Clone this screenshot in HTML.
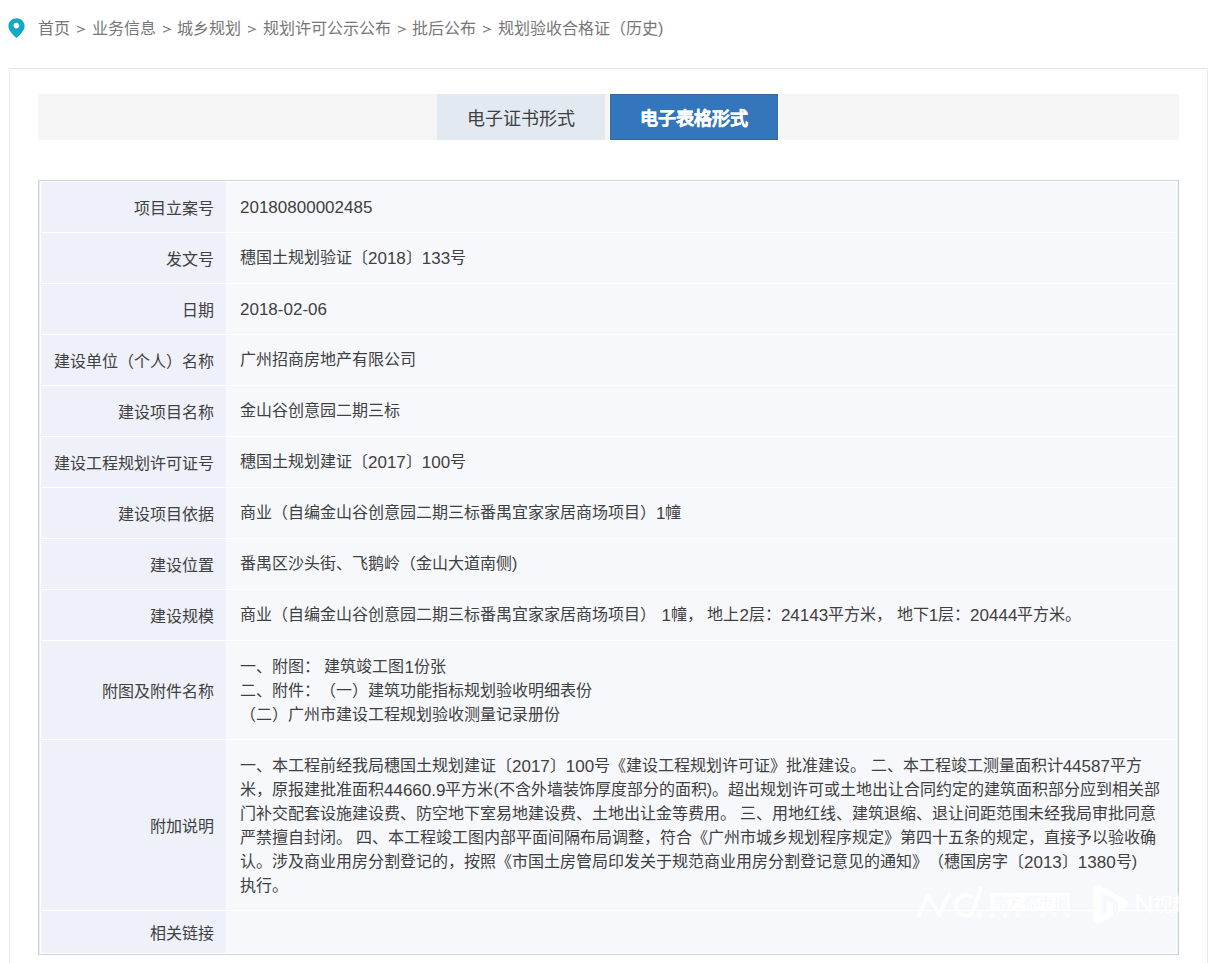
<!DOCTYPE html>
<html lang="zh-CN"><head><meta charset="utf-8">
<style>
*{margin:0;padding:0;box-sizing:border-box}
html,body{width:1218px;height:963px;overflow:hidden;background:#fff}
body{font-family:"Liberation Sans",sans-serif;color:#333;position:relative;text-spacing-trim:space-all}
.crumb{position:absolute;left:38px;top:18px;font-size:16px;line-height:22px;color:#777;white-space:nowrap}
.s{display:inline-block;width:21.6px;height:22px;vertical-align:top}
.pin{position:absolute;left:8px;top:18px}
.panel{position:absolute;left:9px;top:68px;width:1199px;height:920px;border:1px solid #e4e4e4;border-left-color:#ececec;border-right-color:#ececec}
.tabbar{position:absolute;left:38px;top:94px;width:1141px;height:46px;background:#f5f5f5}
.tab{position:absolute;top:94px;height:46px;line-height:46px;padding-top:2px;text-align:center;font-size:18px}
.t1{left:437px;width:168px;background:#e2e9f1;color:#404040}
.t2{left:610px;width:168px;background:#3476bb;border:1px solid #35689f;line-height:44px;color:#fff;font-weight:bold;-webkit-text-stroke:0.35px #fff;box-shadow:-1px 0 0 #fff,1px 0 0 #fff}
.tbl{position:absolute;left:38px;top:180px;width:1141px;height:775px;border:1px solid #c9d6d9;background:#fff}
.dv{position:absolute;left:226px;top:182px;width:1px;height:771px;background:#fafbfd}
.tbl2{position:absolute;left:39px;top:181px;width:1139px;height:773px;border-left:1px solid #e4edef;border-right:1px solid #e4edef}
.lab,.val{position:absolute;display:flex;align-items:center;padding-top:0px;font-size:16px;color:#404040;white-space:nowrap}
.lab{left:41px;width:185px;background:#eef1f9;justify-content:flex-end;padding-right:12px}
.val{left:227px;width:949px;background:#f7f8fc;padding-left:13px;line-height:24px}
.n{font-size:17px;position:relative;top:1px}
.ml{padding-top:2px}
.g{display:inline-block;width:5.5px}
.wm{position:absolute;left:0;top:0}
</style></head><body>
<svg class="pin" width="17" height="21" viewBox="0 0 17 21"><path d="M8.5 0.3C4 0.3 0.4 3.8 0.4 8.2c0 4.4 4.6 8.3 8.1 11.9c3.5-3.6 8.1-7.5 8.1-11.9C16.6 3.8 13 0.3 8.5 0.3z" fill="#12a9c8"/><circle cx="8.4" cy="7.6" r="2.8" fill="#fff"/></svg>
<div class="crumb">首页<svg class="s" viewBox="0 0 21.6 22"><path d="M7 8.3L14.2 11.3L7 14.3" fill="none" stroke="#777" stroke-width="1.15"/></svg>业务信息<svg class="s" viewBox="0 0 21.6 22"><path d="M7 8.3L14.2 11.3L7 14.3" fill="none" stroke="#777" stroke-width="1.15"/></svg>城乡规划<svg class="s" viewBox="0 0 21.6 22"><path d="M7 8.3L14.2 11.3L7 14.3" fill="none" stroke="#777" stroke-width="1.15"/></svg>规划许可公示公布<svg class="s" viewBox="0 0 21.6 22"><path d="M7 8.3L14.2 11.3L7 14.3" fill="none" stroke="#777" stroke-width="1.15"/></svg>批后公布<svg class="s" viewBox="0 0 21.6 22"><path d="M7 8.3L14.2 11.3L7 14.3" fill="none" stroke="#777" stroke-width="1.15"/></svg>规划验收合格证（历史)</div>
<div class="panel"></div>
<div class="tabbar"></div>
<div class="tab t1">电子证书形式</div>
<div class="tab t2">电子表格形式</div>
<div class="tbl"></div><div class="tbl2"></div><div class="dv"></div>
<div class="lab" style="top:182px;height:50px">项目立案号</div><div class="val" style="top:182px;height:50px"><span class="n">20180800002485</span></div>
<div class="lab" style="top:233px;height:50px">发文号</div><div class="val" style="top:233px;height:50px">穗国土规划验证〔<span class="n">2018</span>〕<span class="n">133</span>号</div>
<div class="lab" style="top:284px;height:50px">日期</div><div class="val" style="top:284px;height:50px"><span class="n">2018-02-06</span></div>
<div class="lab" style="top:335px;height:50px">建设单位（个人）名称</div><div class="val" style="top:335px;height:50px">广州招商房地产有限公司</div>
<div class="lab" style="top:386px;height:50px">建设项目名称</div><div class="val" style="top:386px;height:50px">金山谷创意园二期三标</div>
<div class="lab" style="top:437px;height:50px">建设工程规划许可证号</div><div class="val" style="top:437px;height:50px">穗国土规划建证〔<span class="n">2017</span>〕<span class="n">100</span>号</div>
<div class="lab" style="top:488px;height:50px">建设项目依据</div><div class="val" style="top:488px;height:50px">商业（自编金山谷创意园二期三标番禺宜家家居商场项目）<span class="n">1</span>幢</div>
<div class="lab" style="top:539px;height:50px">建设位置</div><div class="val" style="top:539px;height:50px">番禺区沙头街、飞鹅岭（金山大道南侧)</div>
<div class="lab" style="top:590px;height:50px">建设规模</div><div class="val" style="top:590px;height:50px">商业（自编金山谷创意园二期三标番禺宜家家居商场项目）<i class="g"></i><span class="n">1</span>幢， 地上<span class="n">2</span>层：<span class="n">24143</span>平方米， 地下<span class="n">1</span>层：<span class="n">20444</span>平方米。</div>
<div class="lab" style="top:641px;height:98px">附图及附件名称</div><div class="val ml" style="top:641px;height:98px"><div>一、附图： 建筑竣工图<span class="n">1</span>份张<br>二、附件：（一）建筑功能指标规划验收明细表份<br>（二）广州市建设工程规划验收测量记录册份</div></div>
<div class="lab" style="top:740px;height:170px">附加说明</div><div class="val ml" style="top:740px;height:170px"><div>一、本工程前经我局穗国土规划建证〔<span class="n">2017</span>〕<span class="n">100</span>号《建设工程规划许可证》批准建设。 二、本工程竣工测量面积计<span class="n">44587</span>平方<br>米，原报建批准面积<span class="n">44660.9</span>平方米(不含外墙装饰厚度部分的面积)。超出规划许可或土地出让合同约定的建筑面积部分应到相关部<br>门补交配套设施建设费、防空地下室易地建设费、土地出让金等费用。 三、用地红线、建筑退缩、退让间距范围未经我局审批同意<br>严禁擅自封闭。 四、本工程竣工图内部平面间隔布局调整，符合《广州市城乡规划程序规定》第四十五条的规定，直接予以验收确<br>认。涉及商业用房分割登记的，按照《市国土房管局印发关于规范商业用房分割登记意见的通知》（穗国房字〔<span class="n">2013</span>〕<span class="n">1380</span>号)<br>执行。</div></div>
<div class="lab" style="top:911px;height:42px">相关链接</div><div class="val" style="top:911px;height:42px"></div>
<svg class="wm" width="1218" height="963" viewBox="0 0 1218 963" style="pointer-events:none">
<g fill="none" stroke="#fff" stroke-width="4.2" stroke-linecap="round" stroke-linejoin="round" opacity="0.95">
<polyline points="918.6,916 927.8,894.6 939.3,915.3 949.1,894.2"/>
<path d="M971 896.5A10.2 10.2 0 1 0 972 913.5"/>
<path d="M980.5 889L972 914"/>
</g>
<circle cx="979.8" cy="914.8" r="2.8" fill="#fff"/>
<rect x="990.3" y="892.9" width="79.5" height="16.7" fill="#fff"/>
<text x="992.5" y="907" font-size="13.5" font-weight="bold" fill="#f7f8fc" fill-opacity="0.8" textLength="75" lengthAdjust="spacingAndGlyphs">南方都市报</text>
<g fill="#fff" opacity="0.7"><rect x="990.2" y="913" width="4.5" height="4.5"/><rect x="1002.8" y="913" width="4.5" height="4.5"/><rect x="1015.3" y="913" width="4.5" height="4.5"/><rect x="1040.4" y="913" width="4.5" height="4.5"/><rect x="1052.6" y="913" width="4.5" height="4.5"/><rect x="1065.2" y="913" width="4.5" height="4.5"/><rect x="1028" y="915" width="4.5" height="1.2"/></g>
<path d="M1093.5 891Q1093.5 884 1100 885.5L1125 899.5Q1130.5 903.5 1125 908L1113 916L1100 922.5Q1093.5 925 1093.5 918Z" fill="#fff"/>
<path d="M1101.7 893L1118 901.5L1118 913.5L1113 916.5L1113 904L1106.8 900.5L1106.8 912.5L1101.7 915Z" fill="#f7f8fc"/>
<polyline points="1137.5,912 1137.5,895.5 1150.5,912 1150.5,895.5" fill="none" stroke="#fff" stroke-width="2.2" stroke-linejoin="round"/>
<text x="1153" y="911.5" font-size="19" fill="#fff">视频</text>
</svg>
</body></html>
